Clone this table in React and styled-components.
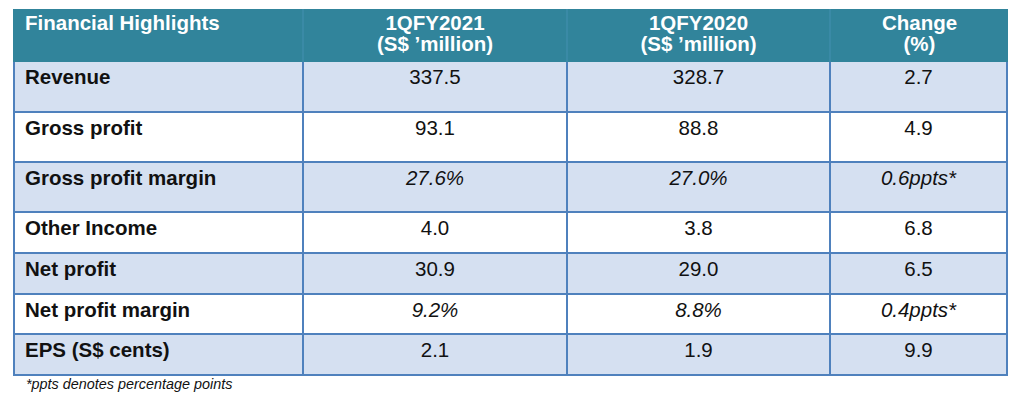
import React from 'react';
import styled, { createGlobalStyle } from 'styled-components';

// Page reset and base font
const GlobalStyle = createGlobalStyle`
  body {
    margin: 0;
    background: #ffffff;
    font-family: "Liberation Sans", Arial, sans-serif;
    color: #111111;
  }
`;

const Wrapper = styled.div`
  padding: 9px 0 0 13px;
`;

const Table = styled.table`
  width: 995px;
  border-spacing: 0;
  table-layout: fixed;
  font-size: 20.5px;
  line-height: 23px;
`;

const HeadRow = styled.tr`
  height: 53px;
  background: #31849b;
`;

const HeadCell = styled.th`
  padding: 3px 6px 0 ${(p) => (p.$left ? '12px' : '6px')};
  text-align: ${(p) => (p.$left ? 'left' : 'center')};
  vertical-align: top;
  color: #ffffff;
  font-weight: bold;
  line-height: 21px;
  border-right: ${(p) => (p.$last ? 'none' : '2px solid #3a8aa6')};
`;

const Row = styled.tr`
  height: ${(p) => p.$h}px;
  background: ${(p) => (p.$shade ? '#d5e0f1' : '#ffffff')};
`;

const Cell = styled.td`
  padding: 3px 6px 0 ${(p) => (p.$label ? '10px' : '6px')};
  vertical-align: top;
  text-align: ${(p) => (p.$label ? 'left' : 'center')};
  font-weight: ${(p) => (p.$label ? 'bold' : 'normal')};
  font-style: ${(p) => (p.$italic ? 'italic' : 'normal')};
  color: #111111;
  border-right: 2px solid #4f81bd;
  border-bottom: 2px solid #4f81bd;
  border-left: ${(p) => (p.$label ? '2px solid #4f81bd' : 'none')};
`;

const Footnote = styled.p`
  margin: 0 0 0 13px;
  font-size: 14.4px;
  line-height: 16px;
  font-style: italic;
  color: #111111;
`;

const rows = [
  { label: 'Revenue', a: '337.5', b: '328.7', c: '2.7', h: 51 },
  { label: 'Gross profit', a: '93.1', b: '88.8', c: '4.9', h: 50 },
  { label: 'Gross profit margin', a: '27.6%', b: '27.0%', c: '0.6ppts*', h: 50, italic: true },
  { label: 'Other Income', a: '4.0', b: '3.8', c: '6.8', h: 41 },
  { label: 'Net profit', a: '30.9', b: '29.0', c: '6.5', h: 41 },
  { label: 'Net profit margin', a: '9.2%', b: '8.8%', c: '0.4ppts*', h: 40, italic: true },
  { label: 'EPS (S$ cents)', a: '2.1', b: '1.9', c: '9.9', h: 41 },
];

const App = () => (
  <>
    <GlobalStyle />
    <Wrapper>
      <Table>
        <colgroup>
          <col style={{ width: 291 }} />
          <col style={{ width: 264 }} />
          <col style={{ width: 263 }} />
          <col style={{ width: 177 }} />
        </colgroup>
        <thead>
          <HeadRow>
            <HeadCell $left>Financial Highlights</HeadCell>
            <HeadCell>
              1QFY2021
              <br />
              (S$ ’million)
            </HeadCell>
            <HeadCell>
              1QFY2020
              <br />
              (S$ ’million)
            </HeadCell>
            <HeadCell $last>
              Change
              <br />
              (%)
            </HeadCell>
          </HeadRow>
        </thead>
        <tbody>
          {rows.map((r, i) => (
            <Row key={r.label} $h={r.h} $shade={i % 2 === 0}>
              <Cell $label>{r.label}</Cell>
              <Cell $italic={r.italic}>{r.a}</Cell>
              <Cell $italic={r.italic}>{r.b}</Cell>
              <Cell $italic={r.italic}>{r.c}</Cell>
            </Row>
          ))}
        </tbody>
      </Table>
      <Footnote>*ppts denotes percentage points</Footnote>
    </Wrapper>
  </>
);

export default App;
